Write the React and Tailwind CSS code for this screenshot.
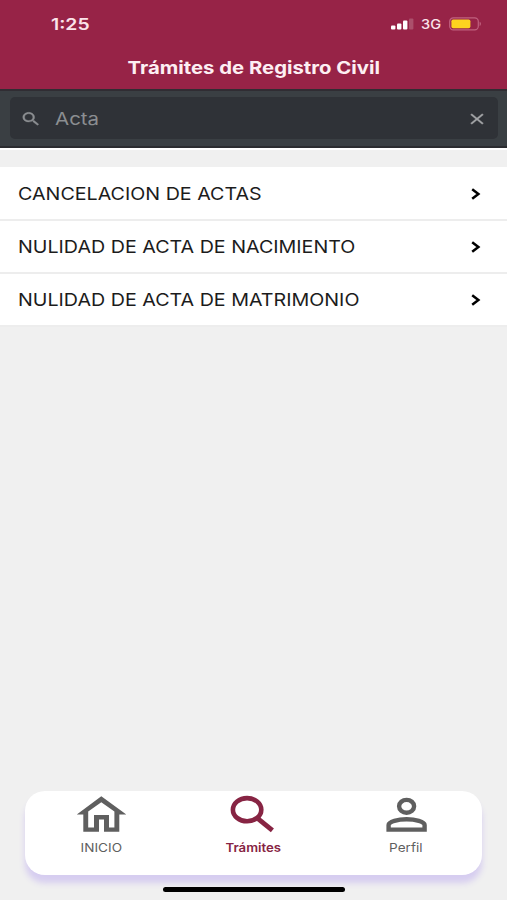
const tramites = [
  "CANCELACION DE ACTAS",
  "NULIDAD DE ACTA DE NACIMIENTO",
  "NULIDAD DE ACTA DE MATRIMONIO",
];

const smallIcons = {
  search:
    "M15.5 14h-.79l-.28-.27C15.41 12.59 16 11.11 16 9.5 16 5.91 13.09 3 9.5 3S3 5.91 3 9.5 5.91 16 9.5 16c1.61 0 3.09-.59 4.23-1.57l.27.28v.79l5 4.99L20.49 19l-4.99-5zm-6 0C7.01 14 5 11.99 5 9.5S7.01 5 9.5 5 14 7.01 14 9.5 11.99 14 9.5 14z",
  close:
    "M19 6.41L17.59 5 12 10.59 6.41 5 5 6.41 10.59 12 5 17.59 6.41 19 12 13.41 17.59 19 19 17.59 13.41 12z",
};

const SmallIcon = ({ name, className }) => (
  <svg
    viewBox="0 0 24 24"
    preserveAspectRatio="none"
    fill="currentColor"
    stroke="currentColor"
    strokeWidth="0.4"
    className={className}
    aria-hidden="true"
  >
    <path d={smallIcons[name]} />
  </svg>
);

const tabIcons = {
  home: (
    <path
      fill="currentColor"
      fillRule="evenodd"
      d="M30.3 6.3L55.3 24.6H48.3V41.8H33V29.5H28V41.8H12.3V24.6H5.8zM30.3 12.3L17.2 21.6V37.4H23V25H38V37.4H43.4V21.6z"
    />
  ),
  search: (
    <g fill="none" stroke="currentColor">
      <ellipse cx="24.1" cy="19.7" rx="14.2" ry="11.6" strokeWidth="4.6" />
      <path d="M35.2 28.8L49.4 40.4" strokeWidth="4.8" />
    </g>
  ),
  person: (
    <g fill="none" stroke="currentColor">
      <ellipse cx="30.6" cy="16.3" rx="7.5" ry="6.4" strokeWidth="4.4" />
      <path d="M12.6 39.6V35C12.6 31.5 22 29.2 30.6 29.2S48.6 31.5 48.6 35V39.6z" strokeWidth="4.4" />
    </g>
  ),
};

const StatusBar = () => (
  <div className="flex h-[47px] items-center pl-[51px] pr-[25px] text-[#fbe3ea]">
    <span className="origin-left scale-x-[1.21] text-[16px] font-semibold leading-none">1:25</span>
    <div className="ml-auto flex items-center">
      <svg viewBox="0 0 23 12" className="h-[12px] w-[23px]" fill="#fff" aria-hidden="true">
        <rect x="0" y="7.5" width="4.4" height="4" rx="1" />
        <rect x="6" y="5.5" width="4.4" height="6" rx="1" />
        <rect x="12" y="2.6" width="4.4" height="8.9" rx="1" />
        <rect x="18" y="0.4" width="4.4" height="11.1" rx="1" opacity=".2" />
      </svg>
      <span className="ml-[7px] w-[21px] origin-left scale-x-[1.12] pt-px text-[13px] font-medium leading-none">3G</span>
      <svg viewBox="0 0 33 14" className="ml-[7px] h-[14px] w-[33px]" aria-hidden="true">
        <rect x="0.7" y="0.9" width="28.6" height="12" rx="3.6" fill="none" stroke="#c0617f" strokeWidth="1.2" />
        <rect x="2.4" y="2.5" width="19" height="8.8" rx="1.8" fill="#fdd31f" />
        <path d="M30.6 4.8c1.8.6 1.8 3.6 0 4.2z" fill="#c0617f" />
      </svg>
    </div>
  </div>
);

const Header = () => (
  <header className="h-[89px] bg-[#972347]">
    <StatusBar />
    <h1 className="flex h-[42px] items-center justify-center whitespace-nowrap text-[17.5px] font-bold leading-none text-[#fdeff3]">
      <span className="scale-x-[1.16]">Trámites de Registro Civil</span>
    </h1>
  </header>
);

const SearchBar = () => (
  <div className="h-[59px] border-y-2 border-t-[#302d33] border-b-[#2b2c30] bg-[#3a3f43] py-[6px] pl-[10px] pr-[9px]">
    <div className="flex h-[42px] items-center rounded-[5px] bg-[#2f3237] px-[10px] pt-px text-[#8b8e91]">
      <SmallIcon name="search" className="h-[18px] w-[22px]" />
      <span className="ml-[13px] origin-left scale-x-[1.17] pt-px text-[17.5px] leading-none">Acta</span>
      <SmallIcon name="close" className="ml-auto h-[18px] w-[22px] text-[#a3a5a7]" />
    </div>
  </div>
);

const Row = ({ label }) => (
  <li className="flex h-[53px] items-center whitespace-nowrap border-b-2 border-[#ededed] bg-white pl-[18px] pr-[26px]">
    <span className="origin-left scale-x-[1.124] pt-px text-[17.5px] leading-none text-[#1c1c1c]">{label}</span>
    <svg viewBox="0 0 10 12" className="ml-auto h-[12px] w-[10px]" aria-hidden="true">
      <path d="M1.2 1.2L7.4 6 1.2 10.8" fill="none" stroke="#000" strokeWidth="2.5" />
    </svg>
  </li>
);

const Tab = ({ icon, active, children }) => (
  <div className={`flex flex-1 flex-col items-center ${active ? "text-[#872443]" : "text-[#5f5f5f]"}`}>
    <svg viewBox="0 0 60 50" className="-mt-px h-[50px] w-[60px]" aria-hidden="true">
      {tabIcons[icon]}
    </svg>
    <span
      className={`mt-[2px] text-[12px] leading-none ${active ? "scale-x-[1.1] font-semibold" : "scale-x-[1.13] font-normal"}`}
    >
      {children}
    </span>
  </div>
);

const App = () => (
  <div className="flex h-[900px] w-[507px] flex-col overflow-hidden bg-[#f0f0f0] font-['Inter',sans-serif]">
    <Header />
    <SearchBar />
    <main className="flex-1 border-t-2 border-white pt-[17px]">
      <ul className="bg-white pt-px">
        {tramites.map((t) => (
          <Row key={t} label={t} />
        ))}
      </ul>
    </main>
    <nav className="mx-[25px] flex h-[84px] rounded-[20px] bg-white shadow-[0_8px_6px_#d6cdf0]">
      <Tab icon="home">INICIO</Tab>
      <Tab icon="search" active>
        Trámites
      </Tab>
      <Tab icon="person">Perfil</Tab>
    </nav>
    <div className="mx-auto mb-[8px] mt-[12px] h-[5px] w-[182px] rounded-full bg-black" />
  </div>
);

export default App;
